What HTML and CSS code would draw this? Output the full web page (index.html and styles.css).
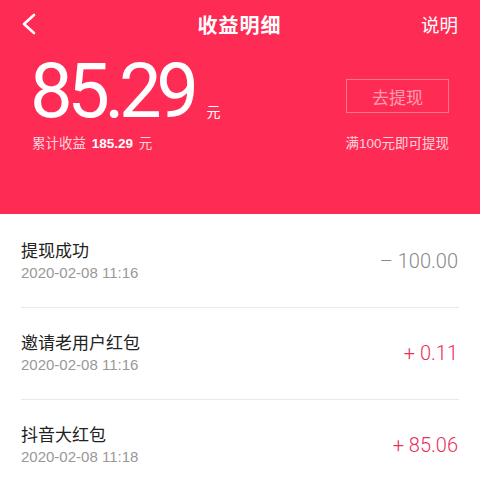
FILE: index.html
```html
<!DOCTYPE html>
<html lang="zh">
<head>
<meta charset="utf-8">
<link rel="stylesheet" href="styles.css">
</head>
<body>
<div class="header">
  <div class="nav">
    <div class="nav-left">
      <svg class="back" width="16" height="22" viewBox="0 0 16 22"><polyline points="13,2 3,11 13,20" fill="none" stroke="#fff" stroke-width="2.6" stroke-linecap="round" stroke-linejoin="round"/></svg>
    </div>
    <div class="nav-title">收益明细</div>
    <div class="nav-right">说明</div>
  </div>
  <div class="balance">
    <div class="balance-row">
      <div class="amount"><span class="num">85.29</span><span class="unit">元</span></div>
      <div class="btn">去提现</div>
    </div>
    <div class="meta-row">
      <div class="total">累计收益 <b>185.29</b> 元</div>
      <div class="hint">满100元即可提现</div>
    </div>
  </div>
</div>
<div class="list">
  <div class="row">
    <div class="info">
      <div class="title">提现成功</div>
      <div class="date">2020-02-08 11:16</div>
    </div>
    <div class="value minus">– 100.00</div>
  </div>
  <div class="row">
    <div class="info">
      <div class="title">邀请老用户红包</div>
      <div class="date">2020-02-08 11:16</div>
    </div>
    <div class="value plus">+ 0.11</div>
  </div>
  <div class="row">
    <div class="info">
      <div class="title">抖音大红包</div>
      <div class="date">2020-02-08 11:18</div>
    </div>
    <div class="value plus">+ 85.06</div>
  </div>
</div>
</body>
</html>
```

FILE: styles.css
```css
* { box-sizing: border-box; }
html, body { margin: 0; padding: 0; }
body {
  width: 480px;
  height: 480px;
  overflow: hidden;
  background: #fff;
  font-family: "Noto Sans CJK SC", "Noto Sans", sans-serif;
}
.header {
  background: #fe2c55;
  height: 214px;
  color: #fff;
}
.nav {
  height: 48px;
  display: grid;
  grid-template-columns: 1fr auto 1fr;
  align-items: center;
  padding: 0 22px 0 21px;
}
.nav-left { display: flex; align-items: center; }
.back { display: block; }
.nav-title {
  font-size: 20px;
  font-weight: 700;
  letter-spacing: 1px;
}
.nav-right {
  justify-self: end;
  font-size: 18.5px;
}
.balance { padding: 0 31px 0 30px; }
.balance-row {
  display: flex;
  justify-content: space-between;
  align-items: flex-start;
  height: 80px;
}
.amount {
  display: flex;
  align-items: baseline;
  padding-top: 7px;
  height: 80px;
}
.num {
  font-family: Roboto, "Liberation Sans", sans-serif;
  font-weight: 400;
  font-size: 76px;
  line-height: 73px;
  letter-spacing: -5.5px;
}
.unit {
  font-size: 14px;
  line-height: 20px;
  margin-left: 13px;
}
.btn {
  margin-top: 31px;
  width: 103px;
  height: 34px;
  border: 1px solid rgba(255,255,255,0.35);
  display: flex;
  align-items: center;
  justify-content: center;
  font-size: 17px;
  color: rgba(255,255,255,0.55);
}
.meta-row {
  display: flex;
  justify-content: space-between;
  align-items: center;
  margin-top: 6px;
  font-family: "Liberation Sans", "Noto Sans CJK SC", sans-serif;
  font-size: 13.5px;
  line-height: 20px;
  color: rgba(255,255,255,0.8);
}
.total { padding-left: 2px; }
.total b {
  font-weight: 700;
  color: #fff;
  margin: 0 2px;
}
.list {
  padding: 2px 21px 0 21px;
}
.row {
  display: flex;
  justify-content: space-between;
  align-items: center;
  height: 92px;
  padding: 22px 0 23px;
  border-bottom: 1px solid #e9e9e9;
}
.title {
  font-size: 17px;
  line-height: 24px;
  color: #222;
}
.date {
  font-family: "Liberation Sans", Arial, sans-serif;
  font-size: 15px;
  line-height: 22px;
  color: #999;
}
.value {
  font-family: Roboto, "Liberation Sans", sans-serif;
  font-weight: 300;
  font-size: 20px;
  padding-right: 1px;
}
.minus { color: #888; }
.plus { color: #e8305a; }
```
